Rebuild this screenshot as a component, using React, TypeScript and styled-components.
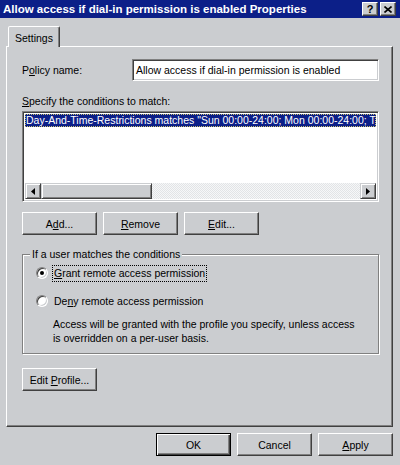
import React from "react";
import styled, { createGlobalStyle } from "styled-components";

const GlobalStyle = createGlobalStyle`
  html, body {
    margin: 0;
    padding: 0;
    background: #cbcdd0;
  }
  * {
    box-sizing: border-box;
  }
`;

const FACE = "#cbcdd0";
const NAVY = "#0c1f88";

const Window = styled.div`
  width: 400px;
  height: 465px;
  display: flex;
  flex-direction: column;
  overflow: hidden;
  background: ${FACE};
  font-family: "Liberation Sans", Arial, sans-serif;
  font-size: 10.5px;
  color: #000;
`;

const TitleBar = styled.div`
  height: 18px;
  flex: none;
  display: flex;
  align-items: center;
  justify-content: space-between;
  padding: 0 4px 0 3px;
  background: ${NAVY};
`;

const TitleText = styled.span`
  color: #fff;
  font-weight: 700;
  font-size: 11.5px;
  white-space: nowrap;
`;

const CaptionButtons = styled.div`
  display: flex;
  gap: 2px;
`;

const CaptionButton = styled.div`
  width: 16px;
  height: 14px;
  display: flex;
  align-items: center;
  justify-content: center;
  background: ${FACE};
  border: 1px solid;
  border-color: #fff #404040 #404040 #fff;
  box-shadow: inset -1px -1px 0 #808080;
  font-weight: 700;
  font-size: 11px;
  line-height: 1;
`;

const Body = styled.div`
  flex: 1;
  display: flex;
  flex-direction: column;
  padding: 8px 7px 0 6px;
`;

const TabStrip = styled.div`
  display: flex;
  padding-left: 2px;
  height: 21px;
  margin-bottom: -1px;
  position: relative;
  z-index: 1;
`;

const Tab = styled.div`
  width: 52px;
  height: 21px;
  display: flex;
  align-items: center;
  justify-content: center;
  padding-top: 1px;
  background: ${FACE};
  border: 1px solid;
  border-bottom: none;
  border-color: #fff #404040 transparent #fff;
  border-radius: 2px 2px 0 0;
  box-shadow: inset -1px 0 0 #808080;
`;

const TabPanel = styled.div`
  height: 381px;
  display: flex;
  flex-direction: column;
  padding: 12px 13px 0 15px;
  border: 1px solid;
  border-color: #fff #404040 #404040 #fff;
  box-shadow: inset -1px -1px 0 #808080;
`;

const FieldRow = styled.div`
  display: grid;
  grid-template-columns: 110px 1fr;
  align-items: center;
`;

const Label = styled.span`
  display: block;
  line-height: 13px;
  white-space: nowrap;
`;

const U = styled.span`
  text-decoration: underline;
  text-underline-offset: 1px;
`;

const Sunken = styled.div`
  background: #fff;
  border: 1px solid;
  border-color: #808080 #fff #fff #808080;
  box-shadow: inset 1px 1px 0 #404040, inset -1px -1px 0 ${FACE};
`;

const TextInput = styled(Sunken)`
  height: 22px;
  display: flex;
  align-items: center;
  padding: 0 3px;
  white-space: nowrap;
`;

const ConditionsLabel = styled(Label)`
  margin-top: 14px;
`;

const ListBox = styled(Sunken)`
  margin-top: 3px;
  height: 91px;
  display: flex;
  flex-direction: column;
  padding: 2px;
`;

const ListItems = styled.div`
  flex: 1;
  overflow: hidden;
`;

const ListItem = styled.div<{ $selected?: boolean }>`
  height: 13px;
  line-height: 12px;
  padding-left: 1px;
  white-space: nowrap;
  overflow: hidden;
  background: ${(p) => (p.$selected ? NAVY : "transparent")};
  color: ${(p) => (p.$selected ? "#fff" : "#000")};
  outline: ${(p) => (p.$selected ? "1px dotted #c8c070" : "none")};
  outline-offset: -1px;
`;

const HScroll = styled.div`
  height: 16px;
  display: flex;
  background-color: #eceef0;
  background-image: repeating-conic-gradient(#f6f7f8 0 25%, #e2e4e6 0 50%);
  background-size: 2px 2px;
`;

const Raised = styled.div`
  background: ${FACE};
  border: 1px solid;
  border-color: ${FACE} #404040 #404040 ${FACE};
  box-shadow: inset 1px 1px 0 #fff, inset -1px -1px 0 #808080;
`;

const ScrollArrow = styled(Raised)`
  width: 16px;
  height: 16px;
  display: flex;
  align-items: center;
  justify-content: center;
`;

const ScrollThumb = styled(Raised)`
  width: 111px;
  height: 16px;
`;

const ScrollTrack = styled.div`
  flex: 1;
`;

const ButtonRow = styled.div<{ $end?: boolean }>`
  display: flex;
  gap: 6px;
  justify-content: ${(p) => (p.$end ? "flex-end" : "flex-start")};
`;

const ActionRow = styled(ButtonRow)`
  margin-top: 10px;
`;

const FooterRow = styled(ButtonRow)`
  margin-top: 6px;
`;

const Button = styled.div<{ $default?: boolean }>`
  width: 75px;
  height: 23px;
  display: flex;
  align-items: center;
  justify-content: center;
  background: ${FACE};
  border: 1px solid;
  border-color: ${(p) => (p.$default ? "#000" : "#fff #404040 #404040 #fff")};
  box-shadow: ${(p) =>
    p.$default
      ? "inset 1px 1px 0 #fff, inset -1px -1px 0 #404040, inset -2px -2px 0 #808080"
      : "inset -1px -1px 0 #808080"};
  white-space: nowrap;
`;

const GroupBox = styled.div`
  position: relative;
  margin-top: 19px;
  height: 100px;
  padding: 10px 12px 0 13px;
  border: 1px solid #808080;
  box-shadow: inset 1px 1px 0 #fff, 1px 1px 0 #fff;
`;

const GroupTitle = styled.span`
  position: absolute;
  top: -7px;
  left: 7px;
  padding: 0 2px;
  line-height: 13px;
  background: ${FACE};
`;

const RadioRow = styled.div<{ $gap?: number }>`
  display: flex;
  align-items: center;
  gap: 4px;
  height: 16px;
  margin-top: ${(p) => p.$gap ?? 0}px;
`;

const RadioCircle = styled.span<{ $checked?: boolean }>`
  position: relative;
  width: 12px;
  height: 12px;
  flex: none;
  border-radius: 50%;
  background: #fff;
  border: 1px solid;
  border-color: #808080 #fff #fff #808080;
  box-shadow: inset 1px 1px 0 #404040, inset -1px -1px 0 ${FACE};

  &::after {
    content: "";
    display: ${(p) => (p.$checked ? "block" : "none")};
    position: absolute;
    left: 3px;
    top: 3px;
    width: 4px;
    height: 4px;
    border-radius: 50%;
    background: #000;
  }
`;

const RadioText = styled.span<{ $focused?: boolean }>`
  padding: 1px 1px;
  line-height: 13px;
  border: 1px dotted ${(p) => (p.$focused ? "#000" : "transparent")};
  white-space: nowrap;
`;

const Note = styled.p`
  margin: 8px 0 0 17px;
  line-height: 14px;
  white-space: nowrap;
`;

const ProfileRow = styled(ButtonRow)`
  margin-top: 14px;
`;

const Triangle = ({ dir }: { dir: "left" | "right" }) => (
  <svg width="4" height="7" viewBox="0 0 4 7">
    <path d={dir === "left" ? "M4 0 L0 3.5 L4 7 Z" : "M0 0 L4 3.5 L0 7 Z"} fill="#000" />
  </svg>
);

export default function App() {
  return (
    <>
      <GlobalStyle />
      <Window>
        <TitleBar>
          <TitleText>Allow access if dial-in permission is enabled Properties</TitleText>
          <CaptionButtons>
            <CaptionButton>?</CaptionButton>
            <CaptionButton>
              <svg width="8" height="7" viewBox="0 0 8 7">
                <path d="M0.5 0.5 L7.5 6.5 M7.5 0.5 L0.5 6.5" stroke="#000" strokeWidth="1.6" />
              </svg>
            </CaptionButton>
          </CaptionButtons>
        </TitleBar>

        <Body>
          <TabStrip>
            <Tab>Settings</Tab>
          </TabStrip>

          <TabPanel>
            <FieldRow>
              <Label>
                P<U>o</U>licy name:
              </Label>
              <TextInput>Allow access if dial-in permission is enabled</TextInput>
            </FieldRow>

            <ConditionsLabel>
              <U>S</U>pecify the conditions to match:
            </ConditionsLabel>
            <ListBox>
              <ListItems>
                <ListItem $selected>
                  Day-And-Time-Restrictions matches "Sun 00:00-24:00; Mon 00:00-24:00; T
                </ListItem>
              </ListItems>
              <HScroll>
                <ScrollArrow>
                  <Triangle dir="left" />
                </ScrollArrow>
                <ScrollThumb />
                <ScrollTrack />
                <ScrollArrow>
                  <Triangle dir="right" />
                </ScrollArrow>
              </HScroll>
            </ListBox>

            <ActionRow>
              <Button>
                <span>
                  A<U>d</U>d...
                </span>
              </Button>
              <Button>
                <span>
                  <U>R</U>emove
                </span>
              </Button>
              <Button>
                <span>
                  <U>E</U>dit...
                </span>
              </Button>
            </ActionRow>

            <GroupBox>
              <GroupTitle>If a user matches the conditions</GroupTitle>
              <RadioRow>
                <RadioCircle $checked />
                <RadioText $focused>
                  <U>G</U>rant remote access permission
                </RadioText>
              </RadioRow>
              <RadioRow $gap={12}>
                <RadioCircle />
                <RadioText>
                  De<U>n</U>y remote access permission
                </RadioText>
              </RadioRow>
              <Note>
                Access will be granted with the profile you specify, unless access
                <br />
                is overridden on a per-user basis.
              </Note>
            </GroupBox>

            <ProfileRow>
              <Button>
                <span>
                  Edit <U>P</U>rofile...
                </span>
              </Button>
            </ProfileRow>
          </TabPanel>

          <FooterRow $end>
            <Button $default>OK</Button>
            <Button>Cancel</Button>
            <Button>
              <span>
                <U>A</U>pply
              </span>
            </Button>
          </FooterRow>
        </Body>
      </Window>
    </>
  );
}
